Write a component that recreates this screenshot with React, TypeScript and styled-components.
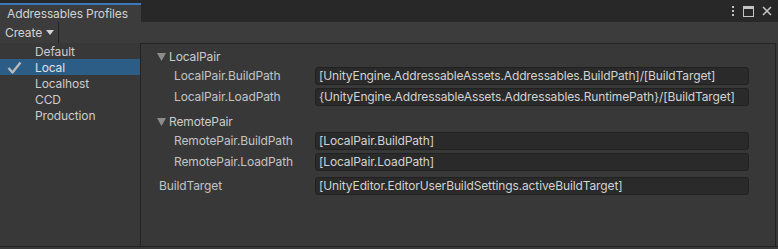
import React from "react";
import styled, { createGlobalStyle } from "styled-components";

const GlobalStyle = createGlobalStyle`
  html, body {
    margin: 0;
    padding: 0;
    background: #282828;
  }
  body {
    font-family: Inter, "Noto Sans", "Liberation Sans", sans-serif;
    font-size: 12px;
    letter-spacing: -0.12px;
    color: #d2d2d2;
  }
`;

const profiles = ["Default", "Local", "Localhost", "CCD", "Production"];

type Variable = { label: string; value: string };
type Group = { name: string; vars: Variable[] };

const groups: Group[] = [
  {
    name: "LocalPair",
    vars: [
      {
        label: "LocalPair.BuildPath",
        value: "[UnityEngine.AddressableAssets.Addressables.BuildPath]/[BuildTarget]",
      },
      {
        label: "LocalPair.LoadPath",
        value: "{UnityEngine.AddressableAssets.Addressables.RuntimePath}/[BuildTarget]",
      },
    ],
  },
  {
    name: "RemotePair",
    vars: [
      { label: "RemotePair.BuildPath", value: "[LocalPair.BuildPath]" },
      { label: "RemotePair.LoadPath", value: "[LocalPair.LoadPath]" },
    ],
  },
];

const App = () => {
  return (
    <>
      <GlobalStyle />
      <Window>
        <TitleBar>
          <Tab>Addressables Profiles</Tab>
          <WindowButtons>
            <svg width="4" height="12" viewBox="0 0 4 12">
              <rect x="1" y="1" width="2" height="2" fill="#c4c4c4" />
              <rect x="1" y="5" width="2" height="2" fill="#c4c4c4" />
              <rect x="1" y="9" width="2" height="2" fill="#c4c4c4" />
            </svg>
            <svg width="11" height="11" viewBox="0 0 11 11">
              <rect x="0.5" y="0.5" width="10" height="10" fill="none" stroke="#c4c4c4" />
              <rect x="0" y="0" width="11" height="3" fill="#c4c4c4" />
            </svg>
            <svg width="10" height="10" viewBox="0 0 10 10">
              <path d="M1 1 L9 9 M9 1 L1 9" stroke="#c4c4c4" strokeWidth="1.6" />
            </svg>
          </WindowButtons>
        </TitleBar>
        <Toolbar>
          <CreateButton>
            Create
            <svg width="8" height="5" viewBox="0 0 8 5">
              <polygon points="0,0 8,0 4,5" fill="#d2d2d2" />
            </svg>
          </CreateButton>
        </Toolbar>
        <Body>
          <ProfileList>
            {profiles.map((p) => (
              <ProfileItem key={p} $selected={p === "Local"}>
                <Check>
                  {p === "Local" && (
                    <svg width="15" height="13" viewBox="0 0 15 13">
                      <path
                        d="M1.5 7 L5.5 11.5 L13.5 1.5"
                        fill="none"
                        stroke="#b9b9b9"
                        strokeWidth="2.4"
                        strokeLinejoin="round"
                      />
                    </svg>
                  )}
                </Check>
                {p}
              </ProfileItem>
            ))}
          </ProfileList>
          <Panel>
            {groups.map((g) => (
              <GroupBlock key={g.name}>
                <GroupHeader>
                  <svg width="9" height="8" viewBox="0 0 9 8">
                    <polygon points="0,0 9,0 4.5,8" fill="#8c8c8c" />
                  </svg>
                  {g.name}
                </GroupHeader>
                {g.vars.map((v) => (
                  <Row key={v.label}>
                    <Label $indent={17}>{v.label}</Label>
                    <Field>{v.value}</Field>
                  </Row>
                ))}
              </GroupBlock>
            ))}
            <Row $gapTop={1}>
              <Label $indent={2}>BuildTarget</Label>
              <Field>[UnityEditor.EditorUserBuildSettings.activeBuildTarget]</Field>
            </Row>
          </Panel>
        </Body>
      </Window>
    </>
  );
};

const Window = styled.div`
  width: 778px;
  height: 249px;
  display: flex;
  flex-direction: column;
  background: #383838;
  overflow: hidden;
`;

const TitleBar = styled.div`
  height: 22px;
  display: flex;
  align-items: flex-end;
  background: #282828;
`;

const Tab = styled.div`
  width: 134px;
  height: 17px;
  border-top: 2px solid #3a79bb;
  background: #3c3c3c;
  padding-left: 7px;
  display: flex;
  align-items: center;
  color: #d2d2d2;
  white-space: nowrap;
`;

const WindowButtons = styled.div`
  margin-left: auto;
  align-self: center;
  display: flex;
  align-items: center;
  gap: 8px;
  padding-right: 6px;
`;

const Toolbar = styled.div`
  height: 21px;
  display: flex;
  background: #3c3c3c;
`;

const CreateButton = styled.div`
  width: 53px;
  padding-left: 5px;
  display: flex;
  align-items: center;
  gap: 4px;
  border-right: 1px solid #232323;
  color: #d2d2d2;
`;

const Body = styled.div`
  flex: 1;
  display: flex;
  border-bottom: 1px solid #232323;
  margin-bottom: 2px;
`;

const ProfileList = styled.div`
  width: 140px;
  display: flex;
  flex-direction: column;
`;

const ProfileItem = styled.div<{ $selected: boolean }>`
  height: 16px;
  display: flex;
  align-items: center;
  background: ${(p) => (p.$selected ? "#2c5d87" : "transparent")};
  color: ${(p) => (p.$selected ? "#e0e0e0" : "#cccccc")};
`;

const Check = styled.span`
  width: 35px;
  padding-left: 7px;
  box-sizing: border-box;
  display: flex;
  align-items: center;
`;

const Panel = styled.div`
  flex: 1;
  margin-right: 2px;
  border: 1px solid #232323;
  border-bottom: none;
  padding: 2px 26px 0 16px;
  display: flex;
  flex-direction: column;
`;

const GroupBlock = styled.div`
  display: flex;
  flex-direction: column;
  margin-bottom: 2px;
`;

const GroupHeader = styled.div`
  height: 21px;
  display: flex;
  align-items: center;
  gap: 3px;
  color: #cccccc;
`;

const Row = styled.div<{ $gapTop?: number }>`
  height: 21px;
  display: grid;
  grid-template-columns: 158px 1fr;
  align-items: start;
  margin-top: ${(p) => p.$gapTop ?? 0}px;
`;

const Label = styled.div<{ $indent: number }>`
  padding-left: ${(p) => p.$indent}px;
  line-height: 18px;
  color: #c4c4c4;
  white-space: nowrap;
`;

const Field = styled.div`
  height: 16px;
  line-height: 16px;
  background: #2a2a2a;
  border: 1px solid #212121;
  border-radius: 3px;
  padding-left: 3px;
  color: #d2d2d2;
  white-space: nowrap;
  overflow: hidden;
`;

export default App;
